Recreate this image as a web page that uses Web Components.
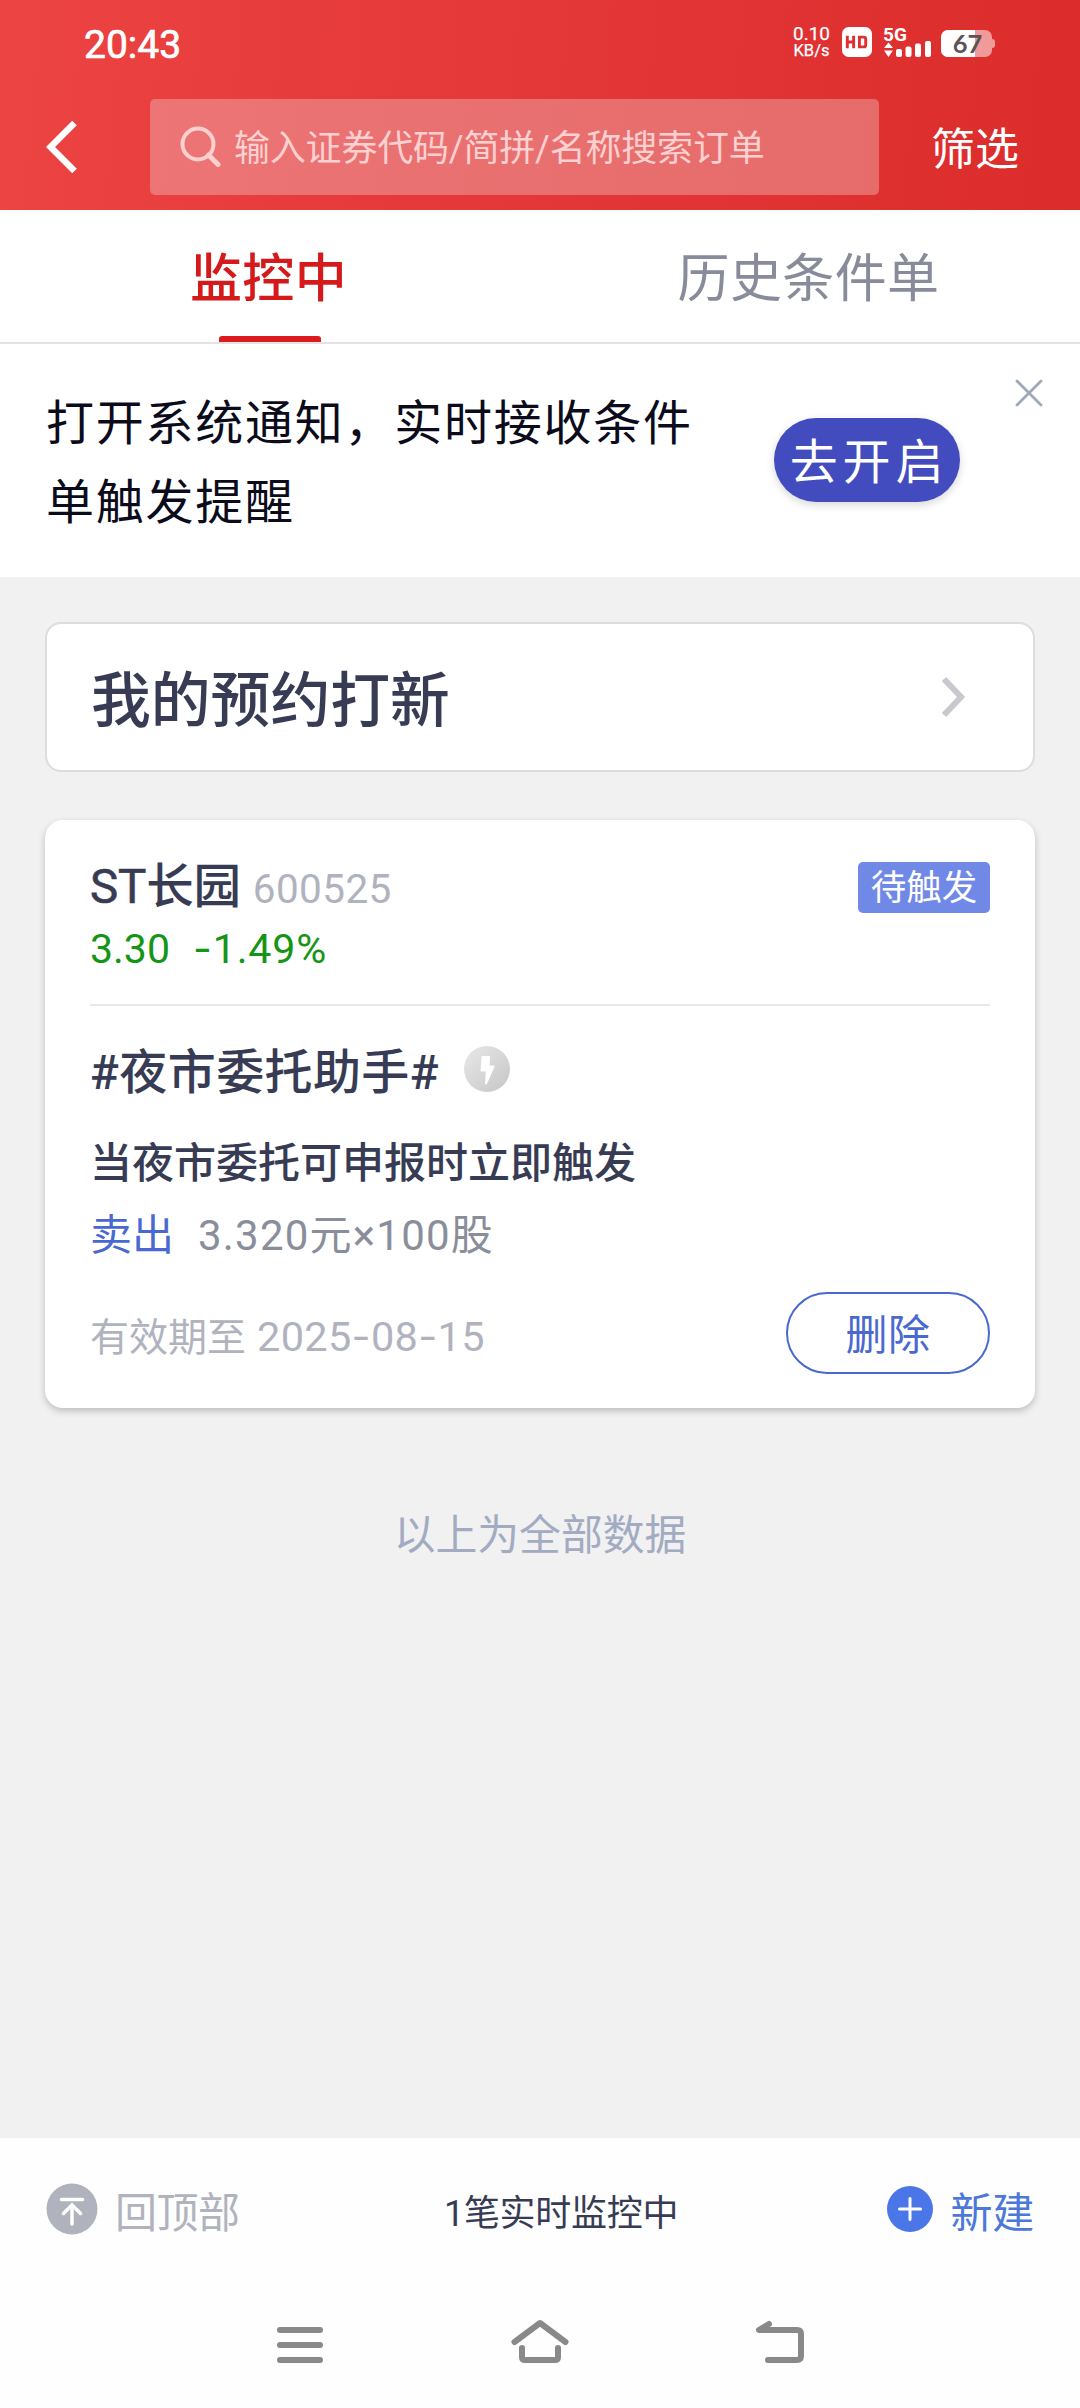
<!DOCTYPE html>
<html lang="zh-CN">
<head>
<meta charset="utf-8">
<meta name="viewport" content="width=device-width">
<title>条件单</title>
<style>
html,body{margin:0;padding:0}
body{width:1080px;height:2408px;overflow:hidden;background:#f1f1f1;font-family:Roboto,"Noto Sans CJK SC",sans-serif}
</style>
</head>
<body>
<order-app></order-app>
<script>
const base = `*{box-sizing:border-box}svg{display:block;flex:none}span,b,i{white-space:nowrap;font-style:normal}u{font-family:Inter;text-decoration:none}`;
function define(name, css, html) {
  customElements.define(name, class extends HTMLElement {
    constructor() {
      super();
      this.attachShadow({mode: 'open'}).innerHTML = `<style>${base}${css}</style>${html}`;
    }
  });
}

define('status-bar', `
:host{display:flex;height:88px;padding:0 85px 4px 84px;align-items:center;color:#fff}
.time{font-size:39px;line-height:40px;-webkit-text-stroke:.7px #fff;flex:1;padding-top:5px}
.net{line-height:17px;width:37px;margin-right:12px;display:flex;flex-direction:column;align-items:center}
.net span{-webkit-text-stroke:.25px #fff}
.net span:first-child{font-size:19px}
.net span:last-child{font-size:16.5px}
svg{overflow:visible}
.sig{margin:0 10px 0 11px}`,
`<span class="time">20:43</span>
<div class="net"><span>0.10</span><span>KB/s</span></div>
<svg width="30" height="30" viewBox="0 0 31 31"><rect width="31" height="31" rx="7" fill="#fff"/><g fill="none" stroke="#df3030" stroke-width="3"><path d="M5.500 9v13M12 9v13M5.500 15.500H12"/><path d="M18 10.500h4.500a2 2 0 0 1 2 2v6a2 2 0 0 1-2 2h-4.500z"/></g></svg>
<svg class="sig" width="48" height="30" viewBox="0 0 48 30" fill="#fff"><text x="0" y="14" font-size="19" font-weight="700" font-family="Roboto">5G</text><path d="M1 21 5.500 15.500 10 21zM1 23.500h9L5.500 30z"/><rect x="13" y="22" width="6" height="8" rx="2"/><rect x="22.500" y="19.500" width="6" height="10.500" rx="2"/><rect x="32" y="16.500" width="6" height="13.500" rx="2"/><rect x="42" y="14" width="6" height="16" rx="2"/></svg>
<svg width="54" height="27" viewBox="0 0 54 27" style="margin-top:3px"><defs><clipPath id="c"><rect width="51" height="27" rx="7"/></clipPath></defs><g clip-path="url(#c)"><rect width="51" height="27" fill="#f09a9a"/><rect width="34" height="27" fill="#fff"/></g><path d="M51 9q3 0 3 3v3q0 3-3 3z" fill="#f09a9a"/><text x="26.500" y="22.800" text-anchor="middle" font-family="Lato" font-weight="700" font-size="25.500" fill="#5c5454">67</text></svg>`);

define('search-header', `
:host{display:flex;height:122px;padding:11px 61px 15px 46px;align-items:center;color:#fff}
.box{display:flex;align-items:center;width:729px;height:96px;margin-left:71px;border-radius:5px;background:rgba(240,190,190,.42);padding-left:30px;color:#ffd0d0;font-size:36px;letter-spacing:-.2px}
.box span{margin-left:13px;line-height:50px;padding-top:4px}
.box svg{margin-top:-1px}
.f{margin-left:auto;font-size:44px;line-height:60px;padding-top:5px}`,
`<svg width="33" height="56" viewBox="0 0 33 56"><path d="M28.500 4 4.500 28 28.500 52" fill="none" stroke="#fff" stroke-width="6.500"/></svg>
<div class="box"><svg width="41" height="41" viewBox="0 0 41 41" fill="none" stroke="#ffd0d0" stroke-width="4"><circle cx="18" cy="18" r="15.500"/><path d="M28.500 29 38 38.500" stroke-width="5" stroke-linecap="round"/></svg><span>输入证券代码/简拼/名称搜索订单</span></div>
<span class="f">筛选</span>`);

define('tab-bar', `
:host{display:flex;height:134px;background:#fff;border-bottom:2px solid #e2e2e9}
div{flex:1;display:flex;flex-direction:column;align-items:center;font-size:52px;letter-spacing:.4px;line-height:60px;color:#888c9a;padding-top:40px}
.on{color:#d41a1a;font-weight:500}
div span{margin-right:3px}
i{width:102px;height:6px;border-radius:3px 3px 0 0;background:#dc1c1c;margin-top:26px}`,
`<div class="on"><span>监控中</span><i></i></div><div><span>历史条件单</span></div>`);

define('notice-banner', `
:host{display:flex;height:233px;background:#fff;padding-left:46px}
.msg{font-size:48px;letter-spacing:1.75px;line-height:79px;color:#0b0b1c;width:728px;padding-top:40px}
.msg span{display:block}
.btn{width:186px;height:84px;border-radius:42px;background:#434cbf;color:#fff;font-size:48px;letter-spacing:4.800px;line-height:90px;text-align:center;margin-top:74px;padding-left:4px;box-shadow:0 3px 8px rgba(0,0,0,.16)}
svg{margin:35px 0 0 55px}`,
`<div class="msg"><span>打开系统通知，实时接收条件</span><span>单触发提醒</span></div>
<div class="btn"><span>去开启</span></div>
<svg width="28" height="28" viewBox="0 0 28 28"><path d="M2 2 26 26M26 2 2 26" stroke="#9da8b9" stroke-width="2.800" stroke-linecap="round"/></svg>`);

define('link-card', `
:host{display:flex;align-items:center;margin:45px 45px 0;height:150px;background:#fff;border:2px solid #dbdcdf;border-radius:16px;padding:0 67px 0 44px}
span{flex:1;font-size:59.800px;line-height:80px;font-weight:500;color:#373c54;padding-top:9px}`,
`<span><slot></slot></span><svg width="26" height="42" viewBox="0 0 26 42"><path d="M4 3 21 21 4 39" fill="none" stroke="#c8c9ce" stroke-width="6"/></svg>`);

define('order-card', `
:host{display:flex;flex-direction:column;margin:48px 45px 0;height:588px;background:#fff;border-radius:18px;padding:0 45px;box-shadow:0 3px 7px rgba(0,0,0,.22)}
.row{display:flex;align-items:center}
.head{margin-top:33px;height:64px}
.name{font-size:47.500px;font-weight:500;color:#373c54;letter-spacing:-.2px;margin-top:-5px}
.name b{font-weight:400;-webkit-text-stroke:.6px #373c54}
.code{font-size:40.500px;color:#b0b3be;letter-spacing:.4px;margin:8px 0 0 12px}
.tag{margin:5px 0 0 auto;width:132px;height:51px;border-radius:5px;background:#7189e6;color:#fff;font-size:35.500px;line-height:53px;text-align:center}
.price{height:64px;color:#159415;font-size:41px;line-height:63px}
.price b{font-weight:400;margin-left:23px;letter-spacing:.900px}
.line{height:2px;background:#e8e8ea;margin-top:23px}
.title{height:64px;margin-top:33px;font-size:48px;font-weight:500;color:#373c54;gap:25px;letter-spacing:.4px}
.title span{margin-top:-6px}.title svg{margin-top:-4px}
.cond{height:60px;line-height:60px;margin-top:31px;font-size:42px;font-weight:500;color:#373c54}
.act{height:60px;margin-top:7px;font-size:42px;color:#8a8d9a;gap:24px}
.act .s{color:#4a68d2}.act .q{letter-spacing:1.200px}
.foot{height:82px;margin-top:31px;color:#b0b3be;font-size:39px}
.foot span{padding-top:2px}
.foot b{font-weight:400;font-size:41.500px;letter-spacing:.3px;margin-left:11px;padding-top:6px}
.foot i{margin-left:auto;width:204px;height:82px;border:2px solid #4a68cf;border-radius:41px;color:#4a68cf;font-size:42px;line-height:84px;text-align:center;letter-spacing:.5px}`,
`<div class="row head"><span class="name"><b>ST</b>长园</span><span class="code">600525</span><span class="tag">待触发</span></div>
<div class="price"><span>3.30</span><b><u>-</u>1.49%</b></div>
<div class="line"></div>
<div class="row title"><span>#夜市委托助手#</span><svg width="46" height="46" viewBox="0 0 46 46"><defs><linearGradient id="g" x1="0" y1="0" x2="1" y2="1"><stop offset="0" stop-color="#e8e8e8"/><stop offset="1" stop-color="#c6c6c6"/></linearGradient></defs><circle cx="23" cy="23" r="23" fill="url(#g)"/><path d="M18.500 11h6.500l-.500 9.500h5L22 37.500 22.800 24.500H17.500z" fill="#fff" stroke="#fff" stroke-width="2" stroke-linejoin="round"/></svg></div>
<div class="cond"><span>当夜市委托可申报时立即触发</span></div>
<div class="row act"><span class="s">卖出</span><span class="q">3.320元×100股</span></div>
<div class="row foot"><span>有效期至</span><b>2025<u>-</u>08<u>-</u>15</b><i>删除</i></div>`);

define('bottom-bar', `
:host{display:flex;height:142px;background:#fefefe;padding:0 46px;align-items:center;justify-content:space-between;font-size:42px}
div{display:flex;align-items:center}
.l{color:#b0b3be;gap:17px;letter-spacing:-.5px}.m{color:#373c54;font-size:36px;letter-spacing:-.3px;margin-right:4px}.r{color:#4c78d9;gap:18px;letter-spacing:-.3px}
.l span,.r span{padding-top:1px}.m span{padding-top:2px}`,
`<div class="l"><svg width="52" height="52" viewBox="0 0 52 52"><circle cx="26" cy="26" r="25.500" fill="#b0b3be"/><path d="M15.500 16.500h21M26 41V22M17.500 30.500 26 22l8.500 8.500" fill="none" stroke="#fff" stroke-width="3.500" stroke-linecap="round"/></svg><span>回顶部</span></div>
<div class="m"><span>1笔实时监控中</span></div>
<div class="r"><svg width="46" height="46" viewBox="0 0 46 46"><circle cx="23" cy="23" r="23" fill="#4a76e8"/><path d="M12.500 23h21M23 12.500v21" stroke="#fff" stroke-width="3" stroke-linecap="round"/></svg><span>新建</span></div>`);

define('system-nav', `
:host{display:flex;height:128px;background:#fefefe;justify-content:center;padding-top:36px}
svg{width:240px;height:56px}g{fill:none;stroke:#898989;stroke-width:6;stroke-linecap:round;stroke-linejoin:round}`,
`<svg viewBox="0 0 240 56"><g><path d="M100 14h40M100 29h40M100 44h40"/></g></svg>
<svg viewBox="0 0 240 56"><g><path d="M94.500 26 120 7l25.500 19M102 32v9q0 3 3 3h30q3 0 3-3v-9"/></g></svg>
<svg viewBox="0 0 240 56"><g><path d="M109 8 99 14h38q4 0 4 4v22q0 4-4 4h-29"/></g></svg>`);

define('order-app', `
:host{display:flex;flex-direction:column;width:1080px;height:2408px;background:#f1f1f1}
.top{background:linear-gradient(95deg,#ec4343 0%,#e43737 50%,#dc2c2c 100%)}
.end{color:#a2abc2;font-size:41.800px;line-height:60px;text-align:center;margin-top:98px}
bottom-bar{margin-top:auto}`,
`<div class="top"><status-bar></status-bar><search-header></search-header></div>
<tab-bar></tab-bar><notice-banner></notice-banner>
<link-card>我的预约打新</link-card>
<order-card></order-card>
<div class="end"><span>以上为全部数据</span></div>
<bottom-bar></bottom-bar><system-nav></system-nav>`);
</script>
</body>
</html>
